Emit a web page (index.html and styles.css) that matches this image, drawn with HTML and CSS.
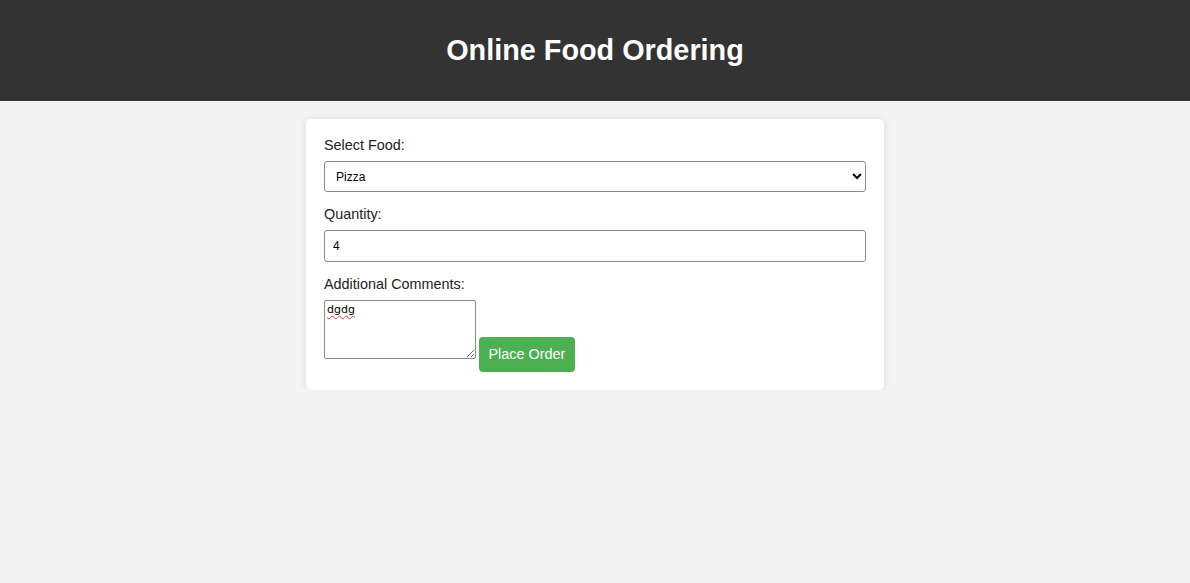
FILE: index.html
```html
<!DOCTYPE html>
<html>
<head>
<meta charset="utf-8">
<title>Online Food Ordering</title>
<link rel="stylesheet" href="styles.css">
</head>
<body>
<header class="site-header">
  <h1 class="site-title">Online Food Ordering</h1>
</header>
<main class="order-card">
  <form class="order-form">
    <label class="field-label" for="food">Select Food:</label>
    <select class="field-select" id="food">
      <option>Pizza</option>
      <option>Burger</option>
      <option>Pasta</option>
    </select>
    <label class="field-label" for="qty">Quantity:</label>
    <input class="field-input" id="qty" type="text" value="4">
    <label class="field-label" for="comments">Additional Comments:</label>
    <div class="last-row"><textarea class="field-textarea" id="comments" spellcheck="false">dgdg</textarea><button class="order-btn" type="button">Place Order</button></div>
  </form>
</main>
</body>
</html>
```

FILE: styles.css
```css
html, body {
  margin: 0;
  padding: 0;
}
body {
  background: #f4f4f4;
  font-family: "Liberation Sans", Arial, sans-serif;
  font-size: 14.4px;
  color: #333;
}
.site-header {
  background: #333;
  color: #fff;
  text-align: center;
  padding: 34px 0;
}
.site-title {
  margin: 0;
  font-size: 28.8px;
  line-height: 33px;
  font-weight: bold;
}
.order-card {
  width: 542px;
  margin: 18px auto 0;
  padding: 18px;
  background: #fff;
  border-radius: 5px;
  box-shadow: 0 0 9px rgba(0, 0, 0, 0.1);
}
.order-form {
  display: flex;
  flex-direction: column;
}
.field-label {
  display: block;
  line-height: 16px;
  margin-bottom: 8px;
  color: #222;
}
.field-select,
.field-input {
  box-sizing: border-box;
  width: 100%;
  height: 31px;
  margin: 0 0 14px;
  font-family: "Liberation Sans", Arial, sans-serif;
  font-size: 12px;
  color: #000;
  border: 1px solid #8a8a8a;
  border-radius: 3px;
  background: #fff;
}
.field-select {
  padding: 0 0 0 7px;
}
.field-input {
  height: 32px;
  padding: 0 8px;
}
.last-row {
  line-height: 16px;
}
.field-textarea {
  box-sizing: border-box;
  width: 152px;
  height: 59px;
  margin: 0;
  padding: 2px 2px;
  font-family: "DejaVu Sans", sans-serif;
  font-size: 11px;
  color: #000;
  border: 1px solid #8a8a8a;
  border-radius: 2px;
  text-decoration: underline wavy #e04040;
  text-decoration-thickness: 1px;
  text-underline-offset: 2px;
  vertical-align: baseline;
}
.order-btn {
  margin: 0 0 0 3px;
  padding: 9px 9.5px 10px;
  background: #4caf50;
  color: #fff;
  border: none;
  border-radius: 4px;
  font-family: "Liberation Sans", Arial, sans-serif;
  font-size: 14.4px;
  line-height: 16px;
  cursor: pointer;
}
```
